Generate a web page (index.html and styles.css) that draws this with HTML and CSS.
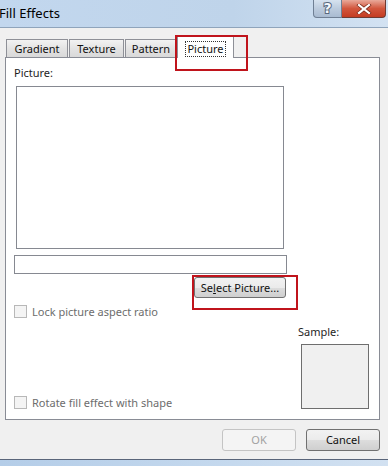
FILE: index.html
```html
<!DOCTYPE html>
<html lang="en">
<head>
    <meta charset="UTF-8">
    <title>Fill Effects</title>
    <link rel="stylesheet" href="styles.css">
</head>
<body>
    <div class="dialog">
        <div class="titlebar">
            <span class="title">Fill Effects</span>
            <div class="caption">
                <div class="cap-help">?</div>
                <div class="cap-close">
                    <svg width="16" height="10" viewBox="0 0 16 10">
                        <path d="M3 1 L13 9 M13 1 L3 9" stroke="#7a2a1a" stroke-width="3.6" stroke-linecap="square"/>
                        <path d="M3 1 L13 9 M13 1 L3 9" stroke="#fff" stroke-width="2.2" stroke-linecap="square"/>
                    </svg>
                </div>
            </div>
        </div>

        <div class="content">
            <div class="tabs">
                <div class="tab">Gradient</div>
                <div class="tab">Texture</div>
                <div class="tab">Pattern</div>
                <div class="tab active"><span class="focus">Picture</span></div>
                <div class="mark mark-tab"></div>
            </div>

            <div class="panel">
                <div class="label">Picture:</div>
                <div class="picture-box"></div>
                <div class="path-field"></div>
                <div class="select-row">
                    <div class="btn btn-select">Se<u>l</u>ect Picture...</div>
                    <div class="mark mark-select"></div>
                </div>
                <label class="check">
                    <span class="box"></span>
                    <span>Lock picture aspect ratio</span>
                </label>
                <div class="lower">
                    <label class="check">
                        <span class="box"></span>
                        <span>Rotate fill effect with shape</span>
                    </label>
                    <div class="sample">
                        <div class="sample-label">Sample:</div>
                        <div class="sample-box"></div>
                    </div>
                </div>
            </div>

            <div class="actions">
                <div class="btn btn-ok">OK</div>
                <div class="btn btn-cancel">Cancel</div>
            </div>
        </div>

        <div class="strip"></div>
    </div>
</body>
</html>
```

FILE: styles.css
```css
* {
    margin: 0;
    padding: 0;
    box-sizing: border-box;
}

body {
    width: 388px;
    height: 466px;
    overflow: hidden;
    background-color: #f0f0f0;
    font-family: "Noto Sans", "Open Sans", sans-serif;
    font-size: 11px;
    color: #1e1e1e;
}

.dialog {
    height: 466px;
    display: flex;
    flex-direction: column;
}

/* title bar */
.titlebar {
    height: 28px;
    display: flex;
    justify-content: space-between;
    background: linear-gradient(to right, #c2d7ee, #bfd4ea 60%, #d3e2f2);
    border-bottom: 1px solid #8fa4bb;
}

.title {
    font-size: 13px;
    line-height: 27px;
    margin-left: -1px;
    color: #000;
}

.caption {
    display: flex;
    height: 18px;
    margin-right: 2px;
}

.cap-help {
    width: 29px;
    text-align: center;
    font-family: "DejaVu Sans", sans-serif;
    font-size: 14px;
    font-weight: bold;
    line-height: 17px;
    color: #f4f7fb;
    -webkit-text-stroke: 2px #57677d;
    paint-order: stroke fill;
    background: linear-gradient(#d6e2ef, #bccbdd 50%, #a9bbd1);
    border: 1px solid #6f7f94;
    border-top: none;
    border-radius: 0 0 0 4px;
}

.cap-close {
    width: 44px;
    display: flex;
    align-items: center;
    justify-content: center;
    background: linear-gradient(#e9a99a, #d2563d 50%, #c43c22);
    border: 1px solid #6f3a32;
    border-left: none;
    border-top: none;
    border-radius: 0 0 4px 0;
}

/* content */
.content {
    flex: 1;
    display: flex;
    flex-direction: column;
}

.tabs {
    position: relative;
    display: flex;
    align-items: flex-end;
    height: 21px;
    margin: 8px 0 0 6px;
}

.tab {
    height: 18px;
    line-height: 17px;
    text-align: center;
    margin-right: 1px;
    color: #111;
    background: linear-gradient(#f2f2f2, #e3e3e3 50%, #d9d9d9);
    border: 1px solid #8e9097;
    border-bottom: none;
}

.tab:nth-child(1) { width: 62px; }
.tab:nth-child(2) { width: 55px; }
.tab:nth-child(3) { width: 52px; }

.tab.active {
    width: 57px;
    height: 22px;
    margin-bottom: -1px;
    margin-left: -1px;
    background: #fff;
    position: relative;
    z-index: 1;
    padding-top: 3px;
}

.focus {
    display: inline-block;
    line-height: 14px;
    padding: 0 1px;
    outline: 1px dotted #333;
}

.mark {
    position: absolute;
    border: 2px solid #c0141c;
    z-index: 2;
}

.mark-tab {
    left: 169px;
    top: -1px;
    width: 73px;
    height: 36px;
}

.panel {
    margin-left: 5px;
    width: 375px;
    height: 363px;
    background: #fff;
    border: 1px solid #898c95;
    padding: 7px 10px 0 8px;
    display: flex;
    flex-direction: column;
}

.label {
    line-height: 16px;
}

.picture-box {
    margin: 5px 0 0 2px;
    width: 268px;
    height: 163px;
    border: 1px solid #868991;
}

.path-field {
    margin-top: 6px;
    width: 273px;
    height: 19px;
    border: 1px solid #868991;
}

.select-row {
    position: relative;
    width: 273px;
    display: flex;
    justify-content: flex-end;
    margin-top: 3px;
}

.btn {
    height: 22px;
    line-height: 20px;
    text-align: center;
    border: 1px solid #707070;
    border-radius: 3px;
    background: linear-gradient(#f2f2f2, #ebebeb 50%, #dddddd 51%, #cfcfcf);
    color: #111;
}

.btn-select {
    width: 92px;
    height: 21px;
    margin-right: 1px;
    line-height: 19px;
}

.mark-select {
    left: 178px;
    top: -2px;
    width: 106px;
    height: 35px;
}

.check {
    display: flex;
    align-items: center;
    gap: 5px;
    height: 13px;
    color: #6d6d6d;
    margin-top: 7px;
}

.box {
    width: 13px;
    height: 13px;
    border: 1px solid #b8b8b8;
    background: #f4f4f4;
}

.lower {
    flex: 1;
    display: flex;
    justify-content: space-between;
    align-items: flex-end;
    padding-bottom: 10px;
}

.sample {
    display: flex;
    flex-direction: column;
}

.sample-label {
    line-height: 16px;
    margin-left: -3px;
    margin-bottom: 4px;
}

.sample-box {
    width: 68px;
    height: 65px;
    background: #f0f0f0;
    border: 1px solid #6e6e6e;
}

.actions {
    display: flex;
    justify-content: flex-end;
    gap: 10px;
    margin: 9px 8px 0 0;
}

.btn-ok,
.btn-cancel {
    width: 74px;
}

.btn-ok {
    color: #a2a2a2;
    border-color: #c4c4c4;
    background: #f4f4f4;
}

.strip {
    margin-top: auto;
    height: 7px;
    border-top: 1px solid #59657a;
    background: linear-gradient(to right, #b4cde8, #c5d9ee 60%, #d2e1f1);
}
```
